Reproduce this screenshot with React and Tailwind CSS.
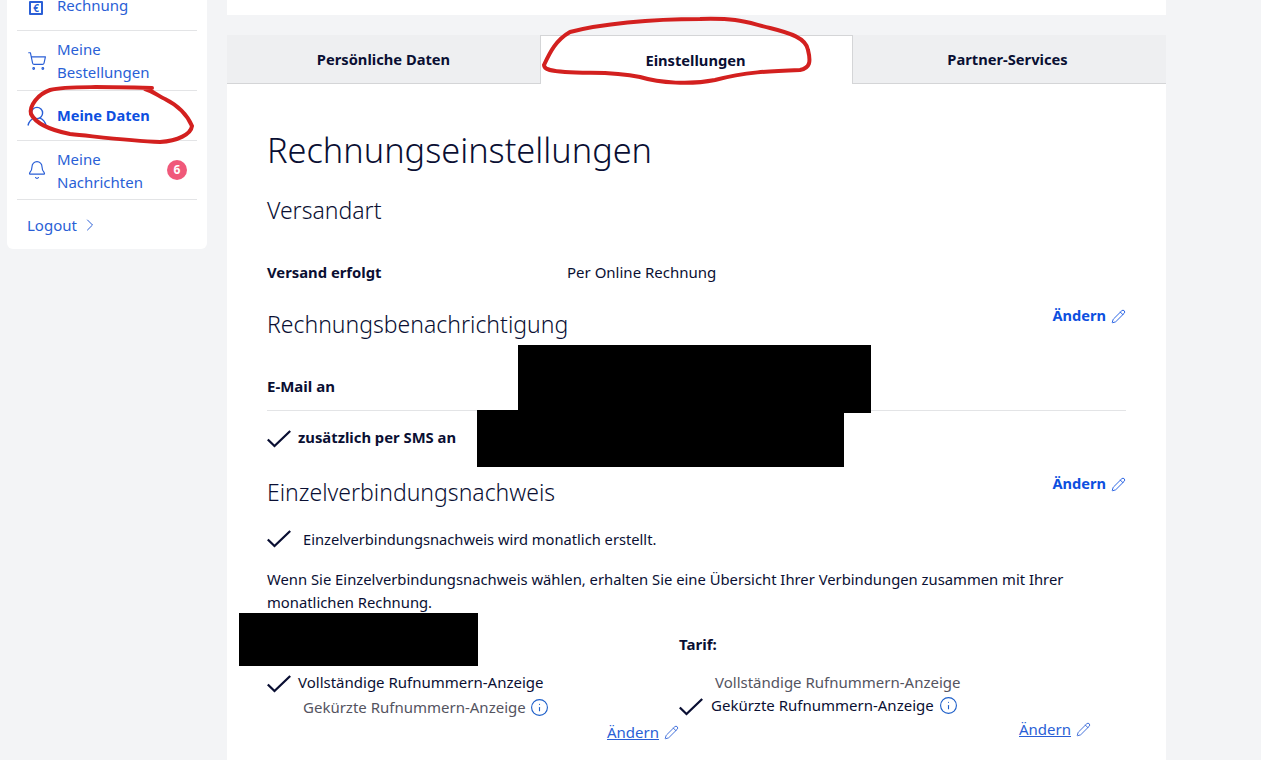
import { Bell, ChevronRight, Info, Pencil, ShoppingCart } from 'lucide-react';

function Check({ className = '' }) {
  return (
    <svg viewBox="0 0 24 18" className={`w-6 h-[18px] shrink-0 ${className}`} fill="none" stroke="#0a0f33" strokeWidth="2.3">
      <path d="M0.8 9.5 L7.5 16 L23.2 1" />
    </svg>
  );
}

function UserIcon() {
  return (
    <svg viewBox="0 0 20 20" className="w-5 h-5" fill="none" stroke="currentColor" strokeWidth="1.4">
      <circle cx="10" cy="7" r="5.6" />
      <path d="M1 19.5 C2 15.5 5 13 7 12.2 M19 19.5 C18 15.5 15 13 13 12.2" />
    </svg>
  );
}

function NavRow({ icon, lines, active, badge, height, textClass = '' }) {
  return (
    <div className={`flex items-center border-b border-[#e3e4e6] pl-[10px] ${height}`}>
      <div className="w-[30px] shrink-0 text-[#2a5fd6]">{icon}</div>
      <div className={`leading-[23px] ${textClass} ${active ? 'text-[14.6px] font-bold text-[#0d4fe0]' : 'text-[15px] text-[#2a5fd6]'}`}>
        {lines.map((l) => (
          <div key={l}>{l}</div>
        ))}
      </div>
      {badge && (
        <span className="ml-auto mr-[10px] w-5 h-5 rounded-full bg-[#f0597a] text-white text-[12px] font-bold flex items-center justify-center">
          {badge}
        </span>
      )}
    </div>
  );
}

function Sidebar() {
  return (
    <aside className="w-[200px] h-[299px] -mt-[50px] ml-[7px] shrink-0 bg-white rounded-md px-[10px]">
      <div className="h-[81px] flex items-end pb-[13px] border-b border-[#e3e4e6] pl-[12px]">
        <div className="w-[28px] shrink-0 pb-[2px]">
          <div className="w-[14px] h-[14px] border-2 border-[#2a5fd6] rounded-[1px] text-[#2a5fd6] text-[10px] leading-[10px] font-bold text-center">€</div>
        </div>
        <span className="text-[15px] leading-[23px] text-[#2a5fd6]">Rechnung</span>
      </div>
      <NavRow height="h-[60px]" icon={<ShoppingCart size={20} strokeWidth={1.4} />} lines={['Meine', 'Bestellungen']} />
      <NavRow height="h-[50px]" icon={<UserIcon />} lines={['Meine Daten']} active />
      <NavRow height="h-[59px]" textClass="mt-[1px]" icon={<Bell size={20} strokeWidth={1.4} />} lines={['Meine', 'Nachrichten']} badge="6" />
      <div className="flex items-center gap-[3px] pl-[10px] pt-[14px] text-[15px] leading-[23px] text-[#2a5fd6]">
        Logout <ChevronRight size={20} strokeWidth={1.2} className="-mt-[2px]" />
      </div>
    </aside>
  );
}

function Tab({ label, active, className = '' }) {
  return (
    <div
      className={
        active
          ? 'w-[313px] h-[49px] bg-white border border-b-0 border-[#d4d5d7] flex items-center justify-center pt-[1px] pr-[2px] text-[14.7px] font-bold text-[#0a0f33]'
          : `w-[313px] h-[49px] bg-[#eeeff1] border-b border-[#d4d5d7] flex items-center justify-center text-[14.7px] font-bold text-[#0a0f33] ${className}`
      }
    >
      {label}
    </div>
  );
}

function EditLink({ className = '' }) {
  return (
    <div className={`flex items-center gap-[5px] text-[14.6px] font-bold text-[#0d4fe0] ${className}`}>
      Ändern <Pencil size={15} strokeWidth={1.4} />
    </div>
  );
}

function SmallEdit({ className = '' }) {
  return (
    <div className={`flex items-center gap-[5px] text-[15px] leading-[20px] text-[#2a5fd6] ${className}`}>
      <span className="underline">Ändern</span> <Pencil size={15} strokeWidth={1.4} />
    </div>
  );
}

export default function App() {
  return (
    <div className="relative h-[760px] overflow-hidden bg-[#f3f4f6] text-[#0a0f33] font-['Noto_Sans',sans-serif]">
      <div className="flex items-start">
        <Sidebar />
        <main className="ml-[20px] w-[939px] shrink-0">
          <div className="h-[15px] bg-white" />
          <div className="flex items-end mt-[20px] h-[49px]">
            <Tab label="Persönliche Daten" />
            <Tab label="Einstellungen" active />
            <Tab label="Partner-Services" className="pr-[4px]" />
          </div>
          <div className="bg-white h-[680px] px-[40px]">
            <h1 className="pt-[41px] text-[34.3px] leading-[50px] font-light">Rechnungseinstellungen</h1>
            <h2 className="mt-[22px] text-[23px] leading-[26px] font-light">Versandart</h2>
            <div className="flex mt-[37px] text-[15px] leading-[24px]">
              <span className="w-[300px] text-[14.8px] font-bold">Versand erfolgt</span>
              <span>Per Online Rechnung</span>
            </div>
            <div className="flex justify-between mt-[23px]">
              <h2 className="mt-[4px] text-[23px] leading-[26px] font-light">Rechnungsbenachrichtigung</h2>
              <EditLink className="h-[24px] -mt-[3px]" />
            </div>
            <div className="mt-[37px] pb-[12px] border-b border-[#e3e4e6] text-[15px] leading-[24px] font-bold">E-Mail an</div>
            <div className="flex items-center gap-[7px] mt-[14px] text-[14.8px] leading-[24px] font-bold">
              <Check className="mt-[4px]" /> zusätzlich per SMS an
            </div>
            <div className="flex justify-between mt-[29px]">
              <h2 className="text-[23px] leading-[28px] font-light">Einzelverbindungsnachweis</h2>
              <EditLink className="h-[24px] -mt-[6px]" />
            </div>
            <div className="flex items-center gap-[12px] mt-[21px] text-[14.7px] leading-[24px]">
              <Check /> Einzelverbindungsnachweis wird monatlich erstellt.
            </div>
            <p className="mt-[17px] text-[14.8px] leading-[23px] w-[830px]">
              Wenn Sie Einzelverbindungsnachweis wählen, erhalten Sie eine Übersicht Ihrer Verbindungen zusammen mit Ihrer monatlichen Rechnung.
            </p>
            <div className="grid grid-cols-[412px_1fr] mt-[16px] text-[15px]">
              <div>
                <div className="h-[40px]" />
                <div className="flex items-center gap-[7px] h-[24px]">
                  <Check className="mt-[4px]" /> Vollständige Rufnummern-Anzeige
                </div>
                <div className="flex items-center gap-[4px] h-[24px] mt-[1px] pl-[36px] text-[#54545f]">
                  Gekürzte Rufnummern-Anzeige <Info size={19} strokeWidth={1.4} className="text-[#1d5fc9]" />
                </div>
                <SmallEdit className="justify-end mt-[3px]" />
              </div>
              <div>
                <div className="h-[40px] pt-[2px] font-bold leading-[24px]">Tarif:</div>
                <div className="h-[24px] pl-[36px] text-[#54545f] flex items-center">Vollständige Rufnummern-Anzeige</div>
                <div className="flex items-center gap-[8px] h-[24px] -mt-[1px]">
                  <Check className="mt-[3px]" /> Gekürzte Rufnummern-Anzeige <Info size={19} strokeWidth={1.4} className="-ml-[3px] text-[#1d5fc9]" />
                </div>
                <SmallEdit className="ml-[340px] mt-[2px]" />
              </div>
            </div>
          </div>
        </main>
      </div>

      {/* redactions */}
      <div className="absolute left-[518px] top-[345px] w-[353px] h-[68px] bg-black" />
      <div className="absolute left-[477px] top-[410px] w-[367px] h-[57px] bg-black" />
      <div className="absolute left-[239px] top-[613px] w-[239px] h-[53px] bg-black" />

      {/* red marker scribbles */}
      <svg className="absolute left-0 top-0 w-[1261px] h-[760px] pointer-events-none" viewBox="0 0 1261 760" fill="none" stroke="#d3201f" strokeWidth="4" strokeLinecap="round">
        <path d="M544 65 C550 52 556 40 570 32 C600 24 650 19 700 19 C740 18 745 22 770 28 C790 33 806 38 808 50 C811 62 810 68 800 70 C770 71 745 72 715 80 C690 85 660 83 640 77 C610 71 590 74 565 72 C552 71 544 70 544 65 Z" />
        <path d="M152 88 C110 87 65 86 50 90 C38 94 29 106 31 114 C36 124 50 130 70 134 C100 137 130 141 160 142 C178 141 191 134 192 126 C186 112 175 104 165 99 C158 96 155 92 145 89" />
      </svg>
    </div>
  );
}
